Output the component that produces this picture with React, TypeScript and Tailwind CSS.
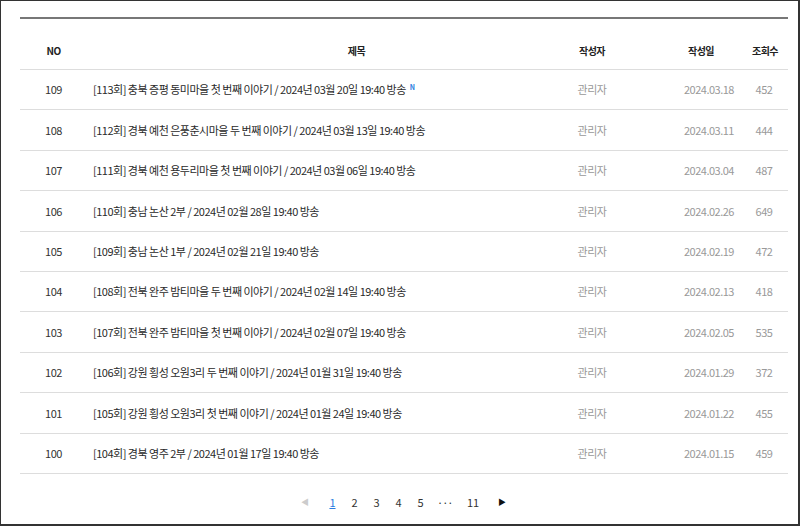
const rows = [
  { no: 109, title: '[113회] 충북 증평 동미마을 첫 번째 이야기 / 2024년 03월 20일 19:40 방송', date: '2024.03.18', views: 452, isNew: true },
  { no: 108, title: '[112회] 경북 예천 은풍춘시마을 두 번째 이야기 / 2024년 03월 13일 19:40 방송', date: '2024.03.11', views: 444 },
  { no: 107, title: '[111회] 경북 예천 용두리마을 첫 번째 이야기 / 2024년 03월 06일 19:40 방송', date: '2024.03.04', views: 487 },
  { no: 106, title: '[110회] 충남 논산 2부 / 2024년 02월 28일 19:40 방송', date: '2024.02.26', views: 649 },
  { no: 105, title: '[109회] 충남 논산 1부 / 2024년 02월 21일 19:40 방송', date: '2024.02.19', views: 472 },
  { no: 104, title: '[108회] 전북 완주 밤티마을 두 번째 이야기 / 2024년 02월 14일 19:40 방송', date: '2024.02.13', views: 418 },
  { no: 103, title: '[107회] 전북 완주 밤티마을 첫 번째 이야기 / 2024년 02월 07일 19:40 방송', date: '2024.02.05', views: 535 },
  { no: 102, title: '[106회] 강원 횡성 오원3리 두 번째 이야기 / 2024년 01월 31일 19:40 방송', date: '2024.01.29', views: 372 },
  { no: 101, title: '[105회] 강원 횡성 오원3리 첫 번째 이야기 / 2024년 01월 24일 19:40 방송', date: '2024.01.22', views: 455 },
  { no: 100, title: '[104회] 경북 영주 2부 / 2024년 01월 17일 19:40 방송', date: '2024.01.15', views: 459 },
];

const font = { fontFamily: '"Noto Sans CJK KR", "Noto Sans", sans-serif' };

export default function App() {
  return (
    <div
      className="w-[800px] h-[526px] bg-white border-l border-t border-r-2 border-b-2 border-[#333] overflow-hidden"
      style={font}
    >
      <div className="ml-[19px] mr-[10px] mt-[16px] border-t-2 border-t-[#777]">
        {/* header */}
        <div className="flex items-center h-[51px] pt-[12px] border-b border-[#ddd] text-[10px] font-bold text-[#222] tracking-[-0.5px]">
          <div className="w-[67px] text-center">NO</div>
          <div className="flex-1 text-center pl-[108px]">제목</div>
          <div className="w-[148px] text-center">작성자</div>
          <div className="w-[74px] text-center pr-[4px]">작성일</div>
          <div className="w-[48px] text-center pl-[2px]">조회수</div>
        </div>

        {rows.map((r) => (
          <div key={r.no} className="flex items-center h-[40.4px] border-b border-[#ddd] text-[11px] tracking-[-0.5px]">
            <div className="w-[67px] text-center text-[#333]">{r.no}</div>
            <div className="flex-1 pl-[6px] text-[#2a2a2a] flex items-center">
              <span>{r.title}</span>
              {r.isNew && (
                <span className="ml-[4px] -mt-[4px] text-[7px] font-bold text-[#2b7de0] leading-none">N</span>
              )}
            </div>
            <div className="w-[148px] text-center text-[#999]">관리자</div>
            <div className="w-[74px] text-center text-[#999] pl-[12px]">{r.date}</div>
            <div className="w-[48px] text-center text-[#999]">{r.views}</div>
          </div>
        ))}
      </div>

      {/* pagination */}
      <div className="flex items-center justify-center mt-[20px] text-[11px] text-[#333] gap-[11px] pl-[8px]">
        <span className="text-[8px] text-[#ccc] w-[10px] text-center mr-[6px]">◀</span>
        <span className="w-[11px] text-center text-[#2b7de0] underline">1</span>
        <span className="w-[11px] text-center">2</span>
        <span className="w-[11px] text-center">3</span>
        <span className="w-[11px] text-center">4</span>
        <span className="w-[11px] text-center">5</span>
        <span className="w-[14px] text-center tracking-[-1px]">···</span>
        <span className="w-[14px] text-center ml-[4px]">11</span>
        <span className="text-[8px] text-[#111] w-[10px] text-center ml-[6px]">▶</span>
      </div>
    </div>
  );
}
